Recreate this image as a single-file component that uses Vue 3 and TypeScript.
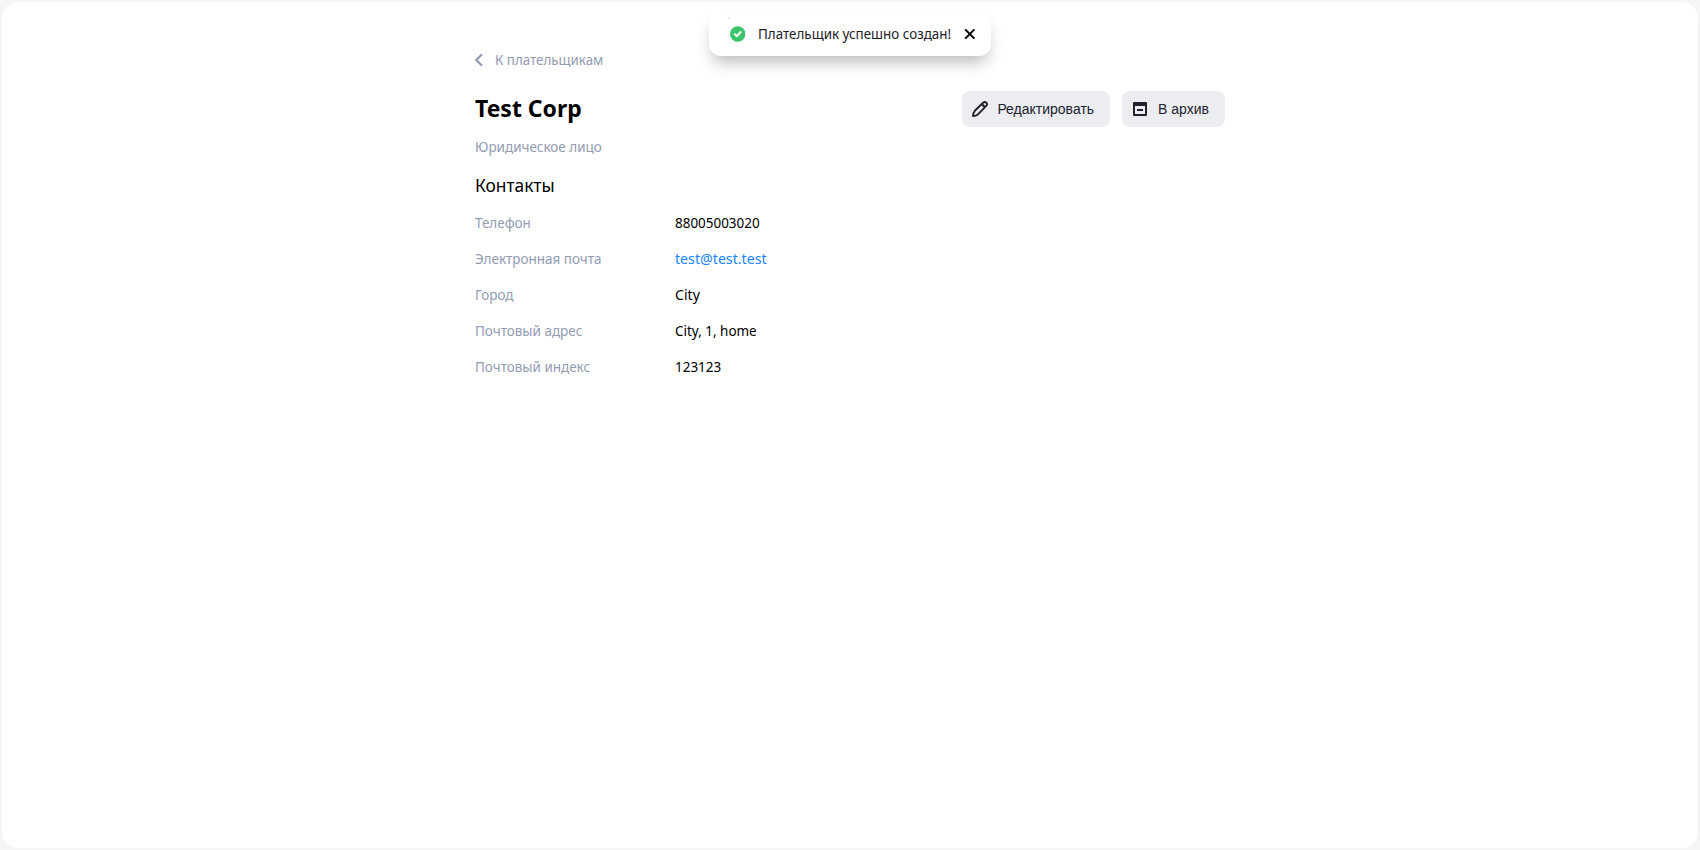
<script setup lang="ts">
interface Field {
  label: string
  value: string
  kind: 'digits' | 'link' | 'word' | 'plain'
}

const fields: Field[] = [
  { label: 'Телефон', value: '88005003020', kind: 'digits' },
  { label: 'Электронная почта', value: 'test@test.test', kind: 'link' },
  { label: 'Город', value: 'City', kind: 'word' },
  { label: 'Почтовый адрес', value: 'City, 1, home', kind: 'plain' },
  { label: 'Почтовый индекс', value: '123123', kind: 'digits' },
]
</script>

<template>
  <div class="page">
    <div class="toast" role="status">
      <svg class="toast-check" viewBox="0 0 16 16">
        <circle cx="8" cy="8" r="8" fill="#3bc46c" />
        <path d="M4.5 7.8 7.1 10.2 11.6 5.4" fill="none" stroke="#fff" stroke-width="2.1" />
      </svg>
      <span class="toast-text"><span class="narrow">Плательщик успешно создан!</span></span>
      <svg class="toast-close" viewBox="0 0 12 12">
        <path d="M1.2 1.2 10.8 10.8M10.8 1.2 1.2 10.8" stroke="#000" stroke-width="2.1" />
      </svg>
    </div>

    <main class="sheet">
      <div class="content">
        <a class="back">
          <svg class="back-icon" viewBox="0 0 8 14">
            <path d="M7 1.2 1.4 7 7 12.8" fill="none" stroke="#929cb3" stroke-width="2.3" />
          </svg>
          <span class="narrow">К плательщикам</span>
        </a>

        <header class="head">
          <h1 class="title"><span class="narrow">Test Corp</span></h1>
          <div class="actions">
            <button class="btn btn-edit">
              <svg class="btn-icon" viewBox="0 0 16 16">
                <path d="M1 15Q1 12 2.8 9.8L11.1 1.8Q12.8.3 14.3 1.7T14.2 4.9L6.2 13.2Q4 15 1 15ZM10.4 2.8Q10.8 5.2 13.2 5.6" fill="none" stroke="#21212d" stroke-width="1.9" stroke-linejoin="round" />
              </svg>
              Редактировать
            </button>
            <button class="btn">
              <svg class="btn-icon" viewBox="0 0 16 16">
                <path d="M2 1H14Q15 1 15 2V14Q15 15 14 15H2Q1 15 1 14V2Q1 1 2 1ZM3 5V13H13V5ZM5 8H11V10H5Z" fill="#21212d" fill-rule="evenodd" />
              </svg>
              В архив
            </button>
          </div>
        </header>

        <p class="kind"><span class="narrow">Юридическое лицо</span></p>
        <h2 class="section"><span class="narrow">Контакты</span></h2>
        <dl class="fields">
          <div v-for="f in fields" :key="f.label" class="field">
            <dt><span class="narrow">{{ f.label }}</span></dt>
            <dd :class="f.kind"><span class="narrow">{{ f.value }}</span></dd>
          </div>
        </dl>
      </div>
    </main>
  </div>
</template>

<style>
body {
  margin: 0;
  overflow: hidden;
}
</style>

<style scoped>
.page {
  box-sizing: border-box;
  height: 850px;
  padding: 2px;
  background: #f5f5f6;
  font: 15px/20px "Noto Sans", sans-serif;
  color: #000;
}
.sheet {
  height: 846px;
  border-radius: 16px;
  background: #fff;
  overflow: hidden;
}
.content {
  width: 750px;
  margin: 47px auto 0;
}
.narrow {
  display: inline-block;
  white-space: nowrap;
  transform: scaleX(0.897);
  transform-origin: left;
}
.back {
  display: flex;
  align-items: center;
  height: 20px;
  gap: 12px;
  color: #929cb3;
}
.back .narrow {
  transform: scaleX(0.89);
}
.back-icon {
  width: 8px;
  height: 14px;
  margin-top: 2px;
}
.head {
  display: flex;
  justify-content: space-between;
  height: 36px;
  margin-top: 22px;
}
.title {
  margin: 3px 0 0;
  font-size: 24px;
  line-height: 28px;
  font-weight: 700;
}
.title .narrow {
  transform: scaleX(0.957);
}
.actions {
  display: flex;
  gap: 12px;
}
.btn {
  display: flex;
  align-items: center;
  gap: 10px;
  height: 36px;
  padding: 0 16px 0 10px;
  border: 0;
  border-radius: 8px;
  background: #ecedf1;
  color: #21212d;
  font: 14px/20px "Liberation Sans", Arial, sans-serif;
}
.btn-edit {
  gap: 9px;
}
.btn-icon {
  width: 16px;
  height: 16px;
}
.kind {
  margin: 9px 0 0;
  color: #929cb3;
}
.section {
  margin: 17px 0 0;
  font-size: 18px;
  line-height: 24px;
  font-weight: 400;
}
.section .narrow {
  transform: scaleX(0.965);
}
.fields {
  margin: 15px 0 0;
}
.field {
  display: grid;
  grid-template-columns: 200px 1fr;
  height: 36px;
}
.field dt {
  color: #929cb3;
}
.field dd {
  margin: 0;
}
.field .link {
  color: #1a85ff;
}
.field .link .narrow {
  transform: scaleX(0.945);
}
.field .word .narrow {
  transform: scaleX(0.94);
}
.toast {
  position: absolute;
  top: 12px;
  left: 709px;
  box-sizing: border-box;
  display: flex;
  align-items: center;
  width: 282px;
  height: 44px;
  padding: 0 15px 0 21px;
  border-radius: 12px;
  background: #fff;
  box-shadow: 0 10px 16px -4px rgba(0, 0, 0, 0.28);
  color: #21201f;
}
.toast::before {
  content: "";
  position: absolute;
  top: 5px;
  left: 19px;
  width: 2px;
  height: 2px;
  background: #eeeef0;
}
.toast-check {
  width: 16px;
  height: 16px;
}
.toast-text {
  width: 206px;
  margin: -2px 0 0 13px;
}
.toast-text .narrow {
  transform: scaleX(0.893);
}
.toast-close {
  width: 12px;
  height: 12px;
}
</style>
